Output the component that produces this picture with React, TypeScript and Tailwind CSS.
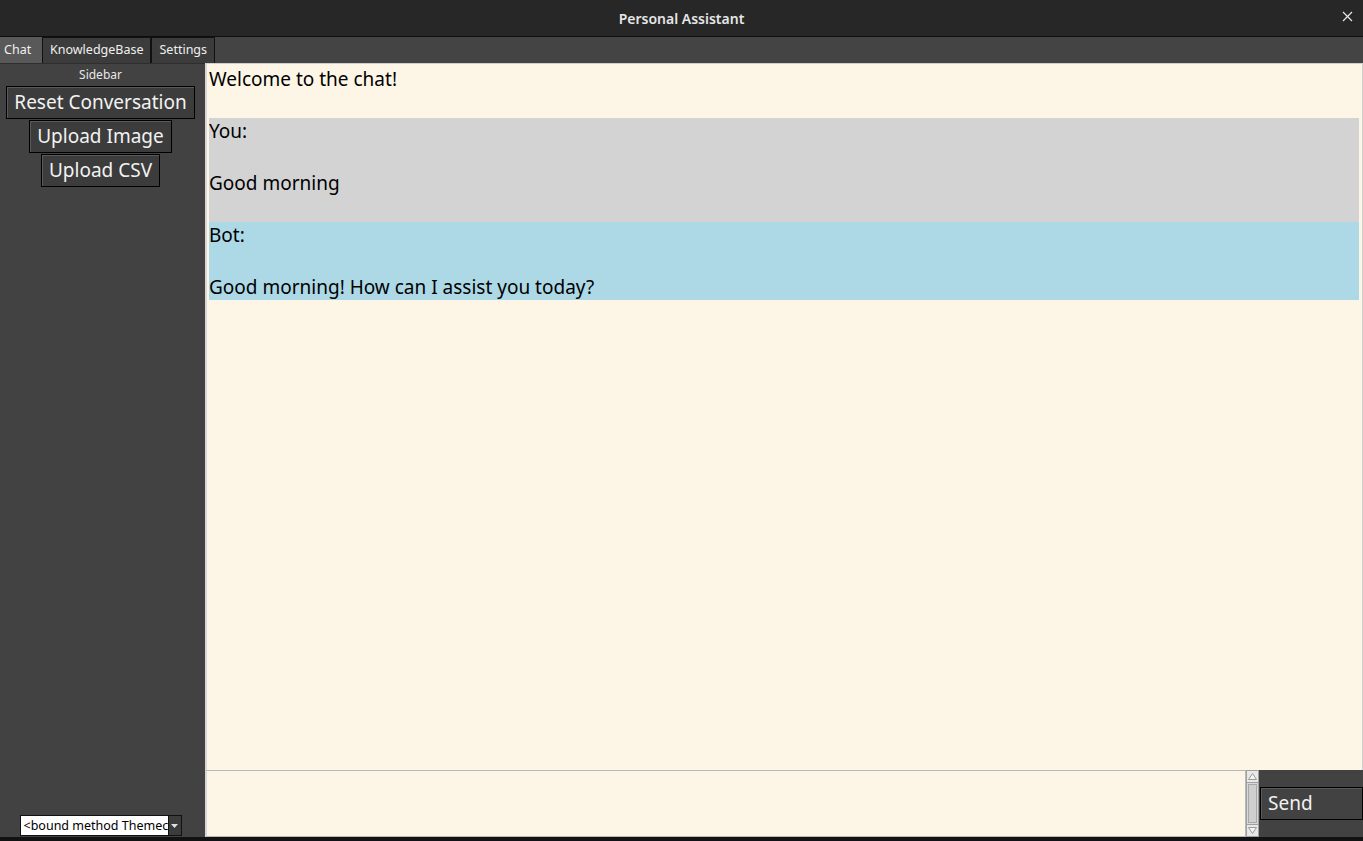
import { useState } from "react";

const font = { fontFamily: '"Noto Sans", "Open Sans", sans-serif' };

function SideButton({ label }: { label: string }) {
  return (
    <button className="h-[33px] px-[7px] bg-[#3c3c3c] border border-black text-[19px] leading-[31px] text-[#f2f2f2] shadow-[inset_1px_1px_0_#5a5a5a]">
      {label}
    </button>
  );
}

export default function App() {
  const [tab, setTab] = useState("Chat");
  const tabs = ["Chat", "KnowledgeBase", "Settings"];

  return (
    <div className="w-[1363px] h-[841px] flex flex-col bg-[#424242] overflow-hidden" style={font}>
      {/* Title bar */}
      <div className="h-[37px] shrink-0 bg-[#272727] border-b border-[#0e0e0e] flex items-center justify-center relative">
        <span className="text-[14px] font-semibold text-[#e6e6e6]">Personal Assistant</span>
        <span className="absolute right-[10px] top-[11px]">
          <svg width="11" height="11" viewBox="0 0 11 11">
            <path d="M1 1 L10 10 M10 1 L1 10" stroke="#e6e6e6" strokeWidth="1.2" />
          </svg>
        </span>
      </div>

      {/* Tabs */}
      <div className="h-[26px] shrink-0 flex bg-[#444444]">
        {tabs.map((t) => (
          <button
            key={t}
            onClick={() => setTab(t)}
            className={
              t === tab
                ? "h-[26px] w-[42px] pl-[4px] text-left bg-[#595959] text-[12.5px] text-[#f0f0f0]"
                : "h-[26px] px-[7px] bg-[#3c3c3c] border border-[#111] border-b-0 text-[12.5px] text-[#f0f0f0]"
            }
          >
            {t}
          </button>
        ))}
      </div>

      <div className="flex flex-1 min-h-0">
        {/* Sidebar */}
        <div className="w-[205px] shrink-0 pr-[4px] flex flex-col items-center bg-[#424242] border-t border-[#2e2e2e]">
          <div className="text-[12px] text-[#e8e8e8] leading-[20px] mt-[1px]">Sidebar</div>
          <div className="flex flex-col items-center gap-[1px] mt-[1px]">
            <SideButton label="Reset Conversation" />
            <SideButton label="Upload Image" />
            <SideButton label="Upload CSV" />
          </div>
          <div className="mt-auto mb-[1px] flex h-[21px] border border-[#111]">
            <div className="w-[147px] bg-white text-[12.5px] leading-[19px] pl-[3px] text-black overflow-hidden whitespace-nowrap">
              &lt;bound method Themec
            </div>
            <div className="w-[13px] bg-[#3c3c3c] border-l border-[#111] flex items-center justify-center">
              <svg width="7" height="4" viewBox="0 0 7 4">
                <path d="M0 0 L7 0 L3.5 4 Z" fill="#e0e0e0" />
              </svg>
            </div>
          </div>
        </div>

        {/* Main */}
        <div className="flex-1 flex flex-col min-w-0">
          <div className="flex-1 bg-[#fdf5e6] border-l-2 border-r border-t border-[#cfcfcf] border-l-[#d8d8d8] pl-[2px] pr-[3px] pt-[2px] text-[19px] leading-[26px] text-black">
            <div>Welcome to the chat!</div>
            <div className="h-[26px]" />
            <div className="bg-[#d3d3d3]">
              <div>You:</div>
              <div className="h-[26px]" />
              <div>Good morning</div>
              <div className="h-[26px]" />
            </div>
            <div className="bg-[#add8e6]">
              <div>Bot:</div>
              <div className="h-[26px]" />
              <div>Good morning! How can I assist you today?</div>
            </div>
          </div>
          <div className="h-[67px] shrink-0 flex bg-[#424242]">
            <div className="flex-1 bg-[#fdf5e6] border border-[#b8b8b8] border-l-2 border-l-[#d8d8d8]" />
            <div className="w-[13px] shrink-0 flex flex-col bg-[#d9d9d9] border border-[#a0a0a0]">
              <div className="h-[12px] flex items-center justify-center bg-[#e8e8e8] border-b border-[#a0a0a0]">
                <svg width="9" height="7" viewBox="0 0 9 7">
                  <path d="M4.5 0.5 L8.5 6.5 L0.5 6.5 Z" fill="#f4f4f4" stroke="#9a9a9a" />
                </svg>
              </div>
              <div className="flex-1 mx-[1px] my-[1px] bg-[#cfcfcf] border border-[#a8a8a8]" />
              <div className="h-[12px] flex items-center justify-center bg-[#e8e8e8] border-t border-[#a0a0a0]">
                <svg width="9" height="7" viewBox="0 0 9 7">
                  <path d="M0.5 0.5 L8.5 0.5 L4.5 6.5 Z" fill="#f4f4f4" stroke="#9a9a9a" />
                </svg>
              </div>
            </div>
            <div className="w-[104px] shrink-0 pt-[17px] pl-[1px]">
              <button className="w-[103px] h-[33px] text-left pl-[7px] bg-[#424242] border border-black text-[19px] leading-[31px] text-[#f2f2f2] shadow-[inset_1px_1px_0_#5a5a5a]">
                Send
              </button>
            </div>
          </div>
        </div>
      </div>

      <div className="h-[4px] shrink-0 bg-[#121212]" />
    </div>
  );
}
